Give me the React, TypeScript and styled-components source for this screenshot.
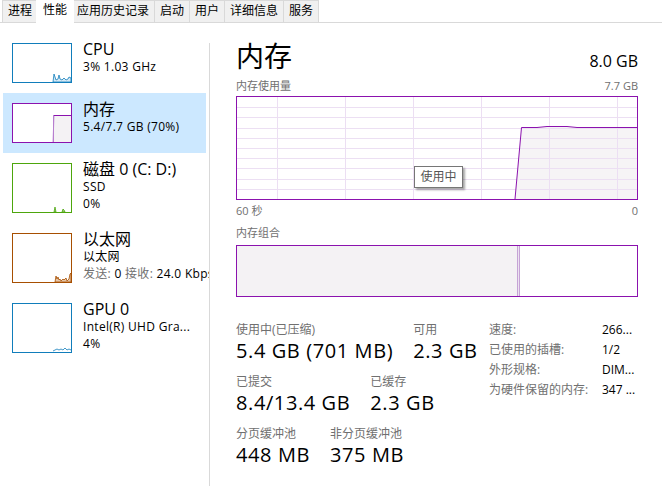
import React from "react";
import styled, { createGlobalStyle } from "styled-components";

const FONT = `"Open Sans", "Noto Sans CJK SC", sans-serif`;
const PURPLE = "#8b12ae";
const GRID = "#ecdff3";
const FILL = "#f4f2f4";
const LABEL = "#707070";

const Global = createGlobalStyle`
  html, body { margin: 0; padding: 0; background: #fff; }
  body { font-family: ${FONT}; color: #000; width: 662px; height: 499px; overflow: hidden; }
  * { box-sizing: border-box; }
`;

const Window = styled.div`
  width: 662px;
  height: 499px;
  display: flex;
  flex-direction: column;
`;

const TabBar = styled.div`
  height: 23px;
  display: flex;
  align-items: flex-end;
  padding-left: 2px;
  border-bottom: 1px solid #d9d9d9;
  flex-shrink: 0;
`;

const Tab = styled.div<{ $active?: boolean }>`
  position: relative;
  font-size: 12px;
  white-space: nowrap;
  ${(p) =>
    p.$active
      ? `
    height: 23px;
    margin: 0 -2px -1px -2px;
    padding: 1px 7px 0;
    line-height: 17px;
    background: #fff;
    z-index: 1;
  `
      : `
    height: 22px;
    margin-left: -1px;
    padding: 0 5px;
    line-height: 20px;
    background: #f0f0f0;
    border: 1px solid #d9d9d9;
    border-bottom: none;
    &:first-child { margin-left: 0; }
  `}
`;

const Body = styled.div`
  flex: 1;
  display: flex;
  min-height: 0;
`;

const Sidebar = styled.div`
  width: 209px;
  flex-shrink: 0;
  padding-top: 10px;
  overflow: hidden;
`;

const Divider = styled.div`
  width: 1px;
  background: #d9d9d9;
  margin: 20px 0 13px;
  flex-shrink: 0;
`;

const Item = styled.div<{ $selected?: boolean }>`
  margin-left: 3px;
  width: 203px;
  padding: 10px 0 10px 9px;
  display: flex;
  gap: 11px;
  white-space: nowrap;
  overflow: visible;
  background: ${(p) => (p.$selected ? "#cce8ff" : "transparent")};
`;

const Thumb = styled.div<{ $color: string; $h: number }>`
  width: 60px;
  height: ${(p) => p.$h}px;
  border: 1px solid ${(p) => p.$color};
  background: #fff;
  flex-shrink: 0;
  svg { display: block; }
`;

const ItemText = styled.div`
  display: flex;
  flex-direction: column;
  margin-top: -3px;
`;

const ItemTitle = styled.div`
  font-size: 16px;
  line-height: 18px;
`;

const ItemSub = styled.div`
  font-size: 12px;
  line-height: 17px;
  letter-spacing: 0.3px;
`;

const Muted = styled.span`
  color: ${LABEL};
`;

const Main = styled.div`
  flex: 1;
  padding: 15px 24px 0 26px;
  display: flex;
  flex-direction: column;
  min-width: 0;
`;

const Header = styled.div`
  display: flex;
  justify-content: space-between;
  align-items: baseline;
  height: 36px;
`;

const Title = styled.div`
  font-size: 28px;
  line-height: 36px;
`;

const Capacity = styled.div`
  font-size: 16px;
  line-height: 36px;
`;

const SmallRow = styled.div<{ $mt: number; $mb: number }>`
  display: flex;
  justify-content: space-between;
  font-size: 11px;
  line-height: 15px;
  color: ${LABEL};
  margin-top: ${(p) => p.$mt}px;
  margin-bottom: ${(p) => p.$mb}px;
`;

const ChartBox = styled.div`
  position: relative;
  height: 104px;
  border: 1px solid ${PURPLE};
  svg { display: block; }
`;

const Tooltip = styled.div`
  position: absolute;
  left: 177px;
  top: 69px;
  width: 49px;
  height: 22px;
  border: 1px solid #767676;
  background: #fff;
  box-shadow: 2px 2px 2px rgba(0, 0, 0, 0.35);
  font-size: 12px;
  line-height: 20px;
  color: #555;
  text-align: center;
`;

const CompBar = styled.div`
  height: 52px;
  border: 1px solid ${PURPLE};
  display: flex;
`;

const Segment = styled.div<{ $bg: string }>`
  background: ${(p) => p.$bg};
  flex-shrink: 0;
`;

const SegSep = styled.div`
  width: 3px;
  border-left: 1px solid #c6a4d6;
  border-right: 1px solid #c6a4d6;
  background: #ece3f0;
  flex-shrink: 0;
`;

const StatsArea = styled.div`
  margin-top: 25px;
  display: flex;
`;

const LeftStats = styled.div`
  width: 253px;
  display: flex;
  flex-direction: column;
  gap: 10px;
`;

const StatRow = styled.div`
  display: flex;
  gap: 20px;
  white-space: nowrap;
`;

const Stat = styled.div`
  display: flex;
  flex-direction: column;
`;

const StatLabel = styled.div`
  font-size: 12px;
  line-height: 16px;
  color: ${LABEL};
`;

const StatValue = styled.div`
  font-size: 20px;
  line-height: 26px;
  letter-spacing: 0.6px;
`;

const InfoTable = styled.div`
  display: grid;
  grid-template-columns: 113px auto;
  grid-auto-rows: 20px;
  font-size: 12px;
  line-height: 20px;
  margin-top: -2px;
  white-space: nowrap;
`;

const InfoKey = styled.div`
  color: ${LABEL};
`;

const InfoVal = styled.div``;

const CpuGraph = () => (
  <svg width="58" height="38" viewBox="0 0 58 38">
    <polygon
      points="40,38 41,30 42,33 43,36 45,35 46,31 47,35 49,36 50,35 51,34 53,36 55,35 56,33 58,34 58,38"
      fill="#d6e9f5"
      stroke="#117dbb"
      strokeWidth="0.8"
    />
  </svg>
);

const MemGraph = () => (
  <svg width="58" height="38" viewBox="0 0 58 38">
    <polygon points="40,38 41,11 58,11 58,38" fill={FILL} />
    <line x1="40" y1="38" x2="41" y2="11" stroke="#c58fd9" strokeWidth="1" />
    <line x1="41" y1="11.5" x2="58" y2="11.5" stroke={PURPLE} strokeWidth="1" />
    <line x1="40.5" y1="11" x2="40.5" y2="38" stroke="#b77fcf" strokeWidth="1" />
  </svg>
);

const DiskGraph = () => (
  <svg width="58" height="48" viewBox="0 0 58 48">
    <polygon points="41,48 42,43 43,48" fill="#a6d28a" stroke="#4da60c" strokeWidth="0.8" />
    <polygon points="49,48 50,45 51,46 52,48" fill="#a6d28a" stroke="#4da60c" strokeWidth="0.8" />
  </svg>
);

const NetGraph = () => (
  <svg width="58" height="48" viewBox="0 0 58 48">
    <polygon
      points="42,48 43,42 44,45 45,43 46,46 47,45 48,47 50,45 51,46 53,44 54,47 56,45 57,40 58,39 58,48"
      fill="#e6c6a8"
      stroke="#a74f01"
      strokeWidth="0.8"
    />
  </svg>
);

const GpuGraph = () => (
  <svg width="58" height="48" viewBox="0 0 58 48">
    <polyline
      points="40,47 42,46 44,45 46,46 48,45 50,46 52,44 54,46 56,45 58,46"
      fill="none"
      stroke="#117dbb"
      strokeWidth="0.8"
    />
  </svg>
);

const UsageChart = () => {
  const W = 400;
  const H = 102;
  const vx = [40.5, 108.5, 176.5, 244.5, 312.5, 380.5];
  const hy = Array.from({ length: 9 }, (_, i) => Math.round((i + 1) * 10.2) + 0.5);
  return (
    <svg width={W} height={H} viewBox={`0 0 ${W} ${H}`}>
      {vx.map((x) => (
        <line key={"v" + x} x1={x} y1={0} x2={x} y2={H} stroke={GRID} strokeWidth="1" />
      ))}
      {hy.map((y) => (
        <line key={"h" + y} x1={0} y1={y} x2={W} y2={y} stroke={GRID} strokeWidth="1" />
      ))}
      <polygon
        points={`278,${H} 284.5,30.5 300,30.5 310,29.5 330,29.5 340,30.5 ${W},30.5 ${W},${H}`}
        fill={FILL}
        fillOpacity="0.85"
      />
      {vx.filter((x) => x > 280).map((x) => (
        <line key={"v2" + x} x1={x} y1={31} x2={x} y2={H} stroke={GRID} strokeWidth="1" />
      ))}
      {hy.filter((y) => y > 31).map((y) => (
        <line key={"h2" + y} x1={283} y1={y} x2={W} y2={y} stroke={GRID} strokeWidth="1" />
      ))}
      <polyline
        points={`278,${H} 284.5,30.5 300,30.5 310,29.5 330,29.5 340,30.5 ${W},30.5`}
        fill="none"
        stroke={PURPLE}
        strokeWidth="1"
      />
    </svg>
  );
};

const tabs = ["进程", "性能", "应用历史记录", "启动", "用户", "详细信息", "服务"];

export default function App() {
  return (
    <>
      <Global />
      <Window>
        <TabBar>
          {tabs.map((t) => (
            <Tab key={t} $active={t === "性能"}>
              {t}
            </Tab>
          ))}
        </TabBar>
        <Body>
          <Sidebar>
            <Item>
              <Thumb $color="#117dbb" $h={40}>
                <CpuGraph />
              </Thumb>
              <ItemText>
                <ItemTitle>CPU</ItemTitle>
                <ItemSub>3% 1.03 GHz</ItemSub>
              </ItemText>
            </Item>
            <Item $selected>
              <Thumb $color={PURPLE} $h={40}>
                <MemGraph />
              </Thumb>
              <ItemText>
                <ItemTitle>内存</ItemTitle>
                <ItemSub>5.4/7.7 GB (70%)</ItemSub>
              </ItemText>
            </Item>
            <Item>
              <Thumb $color="#4da60c" $h={50}>
                <DiskGraph />
              </Thumb>
              <ItemText>
                <ItemTitle>磁盘 0 (C: D:)</ItemTitle>
                <ItemSub>SSD</ItemSub>
                <ItemSub>0%</ItemSub>
              </ItemText>
            </Item>
            <Item>
              <Thumb $color="#a74f01" $h={50}>
                <NetGraph />
              </Thumb>
              <ItemText>
                <ItemTitle>以太网</ItemTitle>
                <ItemSub>以太网</ItemSub>
                <ItemSub>
                  <Muted>发送:</Muted> 0 <Muted>接收:</Muted> 24.0 Kbps
                </ItemSub>
              </ItemText>
            </Item>
            <Item>
              <Thumb $color="#117dbb" $h={50}>
                <GpuGraph />
              </Thumb>
              <ItemText>
                <ItemTitle>GPU 0</ItemTitle>
                <ItemSub>Intel(R) UHD Gra...</ItemSub>
                <ItemSub>4%</ItemSub>
              </ItemText>
            </Item>
          </Sidebar>
          <Divider />
          <Main>
            <Header>
              <Title>内存</Title>
              <Capacity>8.0 GB</Capacity>
            </Header>
            <SmallRow $mt={4} $mb={3}>
              <span>内存使用量</span>
              <span>7.7 GB</span>
            </SmallRow>
            <ChartBox>
              <UsageChart />
              <Tooltip>使用中</Tooltip>
            </ChartBox>
            <SmallRow $mt={3} $mb={0}>
              <span>60 秒</span>
              <span>0</span>
            </SmallRow>
            <SmallRow $mt={7} $mb={5}>
              <span>内存组合</span>
            </SmallRow>
            <CompBar>
              <Segment $bg={FILL} style={{ width: 280 }} />
              <SegSep />
              <Segment $bg="#fff" style={{ flex: 1 }} />
            </CompBar>
            <StatsArea>
              <LeftStats>
                <StatRow>
                  <Stat>
                    <StatLabel>使用中(已压缩)</StatLabel>
                    <StatValue>5.4 GB (701 MB)</StatValue>
                  </Stat>
                  <Stat>
                    <StatLabel>可用</StatLabel>
                    <StatValue>2.3 GB</StatValue>
                  </Stat>
                </StatRow>
                <StatRow>
                  <Stat>
                    <StatLabel>已提交</StatLabel>
                    <StatValue>8.4/13.4 GB</StatValue>
                  </Stat>
                  <Stat>
                    <StatLabel>已缓存</StatLabel>
                    <StatValue>2.3 GB</StatValue>
                  </Stat>
                </StatRow>
                <StatRow>
                  <Stat>
                    <StatLabel>分页缓冲池</StatLabel>
                    <StatValue>448 MB</StatValue>
                  </Stat>
                  <Stat>
                    <StatLabel>非分页缓冲池</StatLabel>
                    <StatValue>375 MB</StatValue>
                  </Stat>
                </StatRow>
              </LeftStats>
              <InfoTable>
                <InfoKey>速度:</InfoKey>
                <InfoVal>266...</InfoVal>
                <InfoKey>已使用的插槽:</InfoKey>
                <InfoVal>1/2</InfoVal>
                <InfoKey>外形规格:</InfoKey>
                <InfoVal>DIM...</InfoVal>
                <InfoKey>为硬件保留的内存:</InfoKey>
                <InfoVal>347 ...</InfoVal>
              </InfoTable>
            </StatsArea>
          </Main>
        </Body>
      </Window>
    </>
  );
}
